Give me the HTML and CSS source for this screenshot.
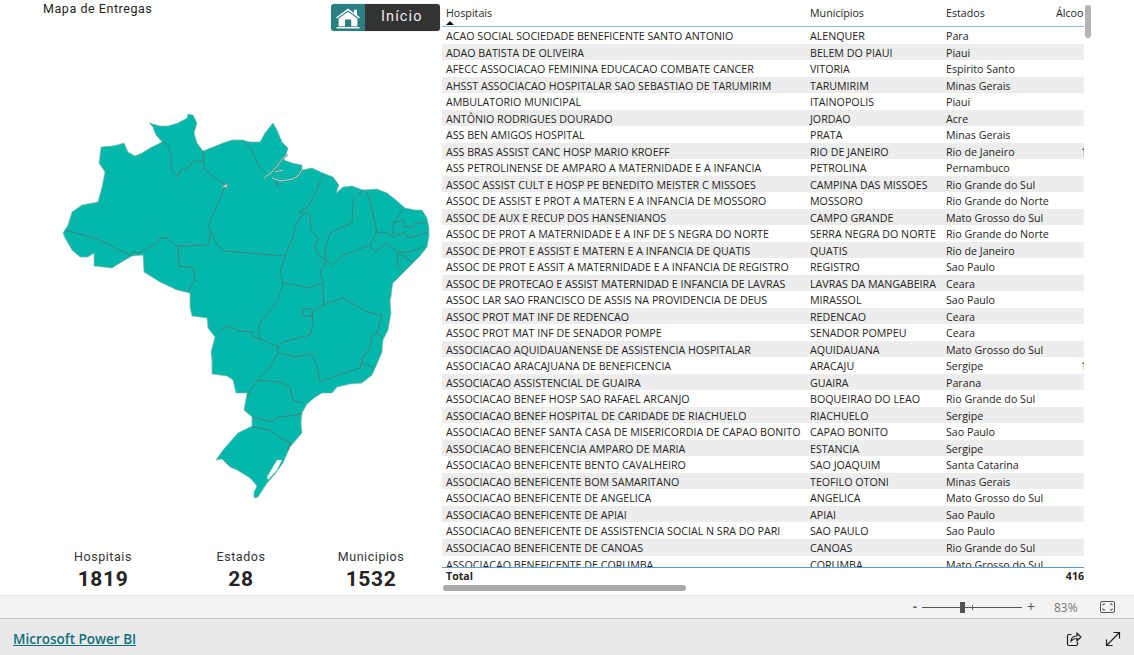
FILE: index.html
```html
<!DOCTYPE html>
<html lang="pt">
<head>
<meta charset="utf-8">
<title>Mapa de Entregas</title>
<link rel="stylesheet" href="styles.css">
</head>
<body>
<div class="app">
  <main class="report">
    <section class="left">
      <header class="left-head">
        <h1 class="title">Mapa de Entregas</h1>
        <a class="home-btn" href="#">
          <span class="home-icon">
            <svg width="26" height="22" viewBox="0 0 26 22"><path class="home-white" d="M1 10.5 13 1.500l6 4.400V2.800h3v5.300l3 2.400-.7 1.100L13 3.400 1.700 11.600z"/><path class="home-white" d="M3.600 11.600 13 4.800l9.400 6.800v7.600h-6.200v-6.600H10v6.600H3.600z"/><rect class="home-white" x="1.500" y="20" width="23" height="1.400"/></svg>
          </span>
          <span class="home-label">Início</span>
        </a>
      </header>
      <svg class="map" width="442" height="405" viewBox="0 100 442 405">
        <path class="land" d="M101 147 112 146 117 145 124 143 128 152 135 156 142 153 150 148 162 142 156 135 154 130 153 127 149 123 160 126 168 126 178 123 187 118 188 114 193 115 197 123 194 133 197 143 203 151 213 147 223 143 232 140 242 140 250 142 260 142 265 133 273 123 277 130 282 142 288 148 286 155 284 160 292 163 302 165 302 170 312 168 323 173 333 177 339 185 336 193 343 187 352 186 363 190 377 189 387 193 396 200 405 208 415 210 422 210 427 218 429 228 429 236 427 247 420 256 413 263 403 273 393 283 392 288 391 297 390 300 391 313 388 330 383 340 382 352 377 364 372 375 362 383 350 384 337 387 332 393 322 393 314 398 307 404 302 413 301 423 302 433 290 447 283 463 275 474 267 483 258 497 254 498 254 492 257 486 250 478 237 470 230 467 222 459 216 460 223 450 230 442 238 433 252 426 252 417 244 410 247 393 236 393 233 380 227 376 212 374 212 360 211 352 215 337 208 328 207 318 192 316 190 307 190 293 177 290 160 282 144 272 143 255 132 256 120 263 112 268 94 266 94 253 88 257 80 257 72 250 65 238 63 233 68 225 72 212 82 205 98 202 102 187 105 172 99 163 100 156z"/>
        <path class="lake" d="M277 460 282 460 277 470 268 480 267 477z"/>
        <path class="blob" d="M222 187 226 184 228 185 226 188z"/>
        <path class="delta-edge" d="M264 178 272 172 278 165 284 157 288 155M272 178 280 181 293 179 298 176 302 170M275 172 283 170M276 181 278 186"/>
        <path class="delta" d="M264 178 272 172 278 165 284 157 288 155M272 178 280 181 293 179 298 176 302 170M275 172 283 170"/>
        <path class="border" d="M65 230 97 239 131 256 133 252 140 253 148 248 157 243 160 238 167 238 176 246 208 245 211 232 208 226 225 187"/>
        <path class="border" d="M178 246 179 266 193 268 195 280 188 292"/>
        <path class="border" d="M162 142 168 145 171 157 171 169 178 177 181 169 187 170 193 161 203 161"/>
        <path class="border" d="M203 151 204 168 213 177 225 184"/>
        <path class="border" d="M211 232 217 245 223 251 285 256 293 237 295 227 303 213 299 212 308 207 317 190 323 174"/>
        <path class="border" d="M242 140 252 150 258 165 265 173"/>
        <path class="border" d="M303 213 310 213 311 230 318 238 315 247 320 257 326 260 333 265 343 255 357 250 370 245 375 252 387 243 398 252 413 263"/>
        <path class="border" d="M285 256 280 273 283 283 295 285 308 288 323 283 320 273 326 260"/>
        <path class="border" d="M323 283 324 307"/>
        <path class="border" d="M283 283 278 300 272 308 260 323 258 333 262 340 278 347 283 342 298 338 310 335 313 323 312 313 323 305 337 300 343 298 350 302 367 312 382 315 377 333 383 337"/>
        <path class="border" d="M303 309H312V316H303z"/>
        <path class="border" d="M217 332 229 326 240 331 253 332 252 336 262 340"/>
        <path class="border" d="M278 347 278 353 270 367 258 380 250 390 248 397"/>
        <path class="border" d="M258 380 280 382 290 387 293 400 303 403"/>
        <path class="border" d="M278 353 295 357 312 354 318 370 320 382 338 375 360 368 363 357 370 348 372 335 377 333"/>
        <path class="border" d="M362 363 372 367"/>
        <path class="border" d="M326 260 325 250 330 233 343 227 352 223 353 200 363 190"/>
        <path class="border" d="M367 192 372 210 377 232 370 245"/>
        <path class="border" d="M375 232 387 233 393 237 405 232 407 238 427 233"/>
        <path class="border" d="M393 237 393 223 403 209"/>
        <path class="border" d="M393 223 403 220 405 227 413 227 415 223 427 223"/>
        <path class="border" d="M398 252 410 252 425 246"/>
        <path class="border" d="M398 253 397 265 403 272"/>
        <path class="border" d="M252 417 273 422 277 417 298 415 302 413"/>
        <path class="border" d="M252 427 270 430 280 438 290 442 288 450"/>
      </svg>
      <div class="cards">
        <div class="card"><div class="card-label">Hospitais</div><div class="card-value">1819</div></div>
        <div class="card"><div class="card-label">Estados</div><div class="card-value">28</div></div>
        <div class="card"><div class="card-label">Municipios</div><div class="card-value">1532</div></div>
      </div>
    </section>
    <section class="grid-wrap">
      <div class="row head"><span class="sorted">Hospitais</span><span>Municípios</span><span>Estados</span><span>Álcool</span></div>
      <div class="rows">
        <div class="row"><span>ACAO SOCIAL SOCIEDADE BENEFICENTE SANTO ANTONIO</span><span>ALENQUER</span><span>Para</span><span></span></div>
        <div class="row"><span>ADAO BATISTA DE OLIVEIRA</span><span>BELEM DO PIAUI</span><span>Piaui</span><span></span></div>
        <div class="row"><span>AFECC ASSOCIACAO FEMININA EDUCACAO COMBATE CANCER</span><span>VITORIA</span><span>Espirito Santo</span><span></span></div>
        <div class="row"><span>AHSST ASSOCIACAO HOSPITALAR SAO SEBASTIAO DE TARUMIRIM</span><span>TARUMIRIM</span><span>Minas Gerais</span><span></span></div>
        <div class="row"><span>AMBULATORIO MUNICIPAL</span><span>ITAINOPOLIS</span><span>Piaui</span><span></span></div>
        <div class="row"><span>ANTÔNIO RODRIGUES DOURADO</span><span>JORDAO</span><span>Acre</span><span></span></div>
        <div class="row"><span>ASS BEN AMIGOS HOSPITAL</span><span>PRATA</span><span>Minas Gerais</span><span></span></div>
        <div class="row"><span>ASS BRAS ASSIST CANC HOSP MARIO KROEFF</span><span>RIO DE JANEIRO</span><span>Rio de Janeiro</span><span class="num">1</span></div>
        <div class="row"><span>ASS PETROLINENSE DE AMPARO A MATERNIDADE E A INFANCIA</span><span>PETROLINA</span><span>Pernambuco</span><span></span></div>
        <div class="row"><span>ASSOC ASSIST CULT E HOSP PE BENEDITO MEISTER C MISSOES</span><span>CAMPINA DAS MISSOES</span><span>Rio Grande do Sul</span><span></span></div>
        <div class="row"><span>ASSOC DE ASSIST E PROT A MATERN E A INFANCIA DE MOSSORO</span><span>MOSSORO</span><span>Rio Grande do Norte</span><span></span></div>
        <div class="row"><span>ASSOC DE AUX E RECUP DOS HANSENIANOS</span><span>CAMPO GRANDE</span><span>Mato Grosso do Sul</span><span></span></div>
        <div class="row"><span>ASSOC DE PROT A MATERNIDADE E A INF DE S NEGRA DO NORTE</span><span>SERRA NEGRA DO NORTE</span><span>Rio Grande do Norte</span><span></span></div>
        <div class="row"><span>ASSOC DE PROT E ASSIST E MATERN E A INFANCIA DE QUATIS</span><span>QUATIS</span><span>Rio de Janeiro</span><span></span></div>
        <div class="row"><span>ASSOC DE PROT E ASSIT A MATERNIDADE E A INFANCIA DE REGISTRO</span><span>REGISTRO</span><span>Sao Paulo</span><span></span></div>
        <div class="row"><span>ASSOC DE PROTECAO E ASSIST MATERNIDAD E INFANCIA DE LAVRAS</span><span>LAVRAS DA MANGABEIRA</span><span>Ceara</span><span></span></div>
        <div class="row"><span>ASSOC LAR SAO FRANCISCO DE ASSIS NA PROVIDENCIA DE DEUS</span><span>MIRASSOL</span><span>Sao Paulo</span><span></span></div>
        <div class="row"><span>ASSOC PROT MAT INF DE REDENCAO</span><span>REDENCAO</span><span>Ceara</span><span></span></div>
        <div class="row"><span>ASSOC PROT MAT INF DE SENADOR POMPE</span><span>SENADOR POMPEU</span><span>Ceara</span><span></span></div>
        <div class="row"><span>ASSOCIACAO AQUIDAUANENSE DE ASSISTENCIA HOSPITALAR</span><span>AQUIDAUANA</span><span>Mato Grosso do Sul</span><span></span></div>
        <div class="row"><span>ASSOCIACAO ARACAJUANA DE BENEFICENCIA</span><span>ARACAJU</span><span>Sergipe</span><span class="num">1</span></div>
        <div class="row"><span>ASSOCIACAO ASSISTENCIAL DE GUAIRA</span><span>GUAIRA</span><span>Parana</span><span></span></div>
        <div class="row"><span>ASSOCIACAO BENEF HOSP SAO RAFAEL ARCANJO</span><span>BOQUEIRAO DO LEAO</span><span>Rio Grande do Sul</span><span></span></div>
        <div class="row"><span>ASSOCIACAO BENEF HOSPITAL DE CARIDADE DE RIACHUELO</span><span>RIACHUELO</span><span>Sergipe</span><span></span></div>
        <div class="row"><span>ASSOCIACAO BENEF SANTA CASA DE MISERICORDIA DE CAPAO BONITO</span><span>CAPAO BONITO</span><span>Sao Paulo</span><span></span></div>
        <div class="row"><span>ASSOCIACAO BENEFICENCIA AMPARO DE MARIA</span><span>ESTANCIA</span><span>Sergipe</span><span></span></div>
        <div class="row"><span>ASSOCIACAO BENEFICENTE BENTO CAVALHEIRO</span><span>SAO JOAQUIM</span><span>Santa Catarina</span><span></span></div>
        <div class="row"><span>ASSOCIACAO BENEFICENTE BOM SAMARITANO</span><span>TEOFILO OTONI</span><span>Minas Gerais</span><span></span></div>
        <div class="row"><span>ASSOCIACAO BENEFICENTE DE ANGELICA</span><span>ANGELICA</span><span>Mato Grosso do Sul</span><span></span></div>
        <div class="row"><span>ASSOCIACAO BENEFICENTE DE APIAI</span><span>APIAI</span><span>Sao Paulo</span><span></span></div>
        <div class="row"><span>ASSOCIACAO BENEFICENTE DE ASSISTENCIA SOCIAL N SRA DO PARI</span><span>SAO PAULO</span><span>Sao Paulo</span><span></span></div>
        <div class="row"><span>ASSOCIACAO BENEFICENTE DE CANOAS</span><span>CANOAS</span><span>Rio Grande do Sul</span><span></span></div>
        <div class="row"><span>ASSOCIACAO BENEFICENTE DE CORUMBA</span><span>CORUMBA</span><span>Mato Grosso do Sul</span><span></span></div>
      </div>
      <div class="total"><span>Total</span><span>416</span></div>
      <div class="hbar"><div class="hthumb"></div></div>
      <div class="vthumb"></div>
    </section>
  </main>
  <div class="zoombar">
    <span class="zoom-sign">-</span>
    <div class="slider"><span class="tick"></span><span class="thumb"></span></div>
    <span class="zoom-sign plus">+</span>
    <span class="zoom-pct">83%</span>
    <svg class="fit" width="15" height="12" viewBox="0 0 15 12"><rect class="ico-thin" x=".5" y=".5" width="14" height="11" rx="1.500"/><path class="ico-thin" d="M3 4.500V3h2M10 3h2v1.500M12 7.500V9h-2M5 9H3V7.500"/></svg>
  </div>
  <footer class="footer">
    <a class="pbi" href="#">Microsoft Power BI</a>
    <div class="foot-icons">
      <svg width="16" height="16" viewBox="0 0 16 16"><path class="ico-dark" d="M5.500 3.500H3A1.500 1.500 0 0 0 1.500 5v8A1.500 1.500 0 0 0 3 14.500h7a1.500 1.500 0 0 0 1.500-1.500v-2"/><path class="ico-dark" d="M5 10c.3-3 2.500-5 6-5V2.200L15 6l-4 3.800V7.500C8.500 7.500 6.500 8.300 5 10z"/></svg>
      <svg width="16" height="16" viewBox="0 0 16 16"><path class="ico-dark" d="M1.500 14.500 14.500 1.500M8.500 1.500h6v6M1.500 8.500v6h6"/></svg>
    </div>
  </footer>
</div>
</body>
</html>
```

FILE: styles.css
```css
* { box-sizing: border-box; }
html, body { margin: 0; padding: 0; height: 100%; background: #fff; }
body { overflow: hidden; font-family: "Open Sans", "Noto Sans", sans-serif; color: #252423; }
.app { display: flex; flex-direction: column; width: 1134px; height: 655px; }
.report { display: flex; height: 595px; background: #fff; flex: none; }

.left { width: 442px; flex: none; display: flex; flex-direction: column; }
.left-head { display: flex; justify-content: space-between; align-items: flex-start; height: 100px; padding: 0 2px 0 43px; }
.title { margin: 2px 0 0; font: 400 12.5px/14px Roboto, sans-serif; letter-spacing: .55px; color: #252423; }
.home-btn { display: flex; width: 109px; height: 27px; margin-top: 4px; border-radius: 3px; overflow: hidden; text-decoration: none; box-shadow: 0 0 1px #999; }
.home-icon { width: 34px; background: #2a7f82; display: flex; align-items: center; justify-content: center; }
.home-white { fill: #fff; }
.home-label { flex: 1; background: #333; color: #eee; font: 400 14.5px/26px Roboto, sans-serif; letter-spacing: 1.1px; padding-left: 16px; }

.map { display: block; flex: none; }
.land { fill: #03b8aa; stroke: #8fb5b1; stroke-width: .7; stroke-linejoin: round; }
.lake { fill: #fff; }
.blob { fill: #ccc; stroke: #777; stroke-width: .5; }
.delta-edge { fill: none; stroke: #4b7c78; stroke-width: 1.5; }
.delta { fill: none; stroke: #e8efee; stroke-width: .8; }
.border { fill: none; stroke: #4b7c78; stroke-width: .9; stroke-linejoin: round; }

.cards { display: grid; grid-template-columns: 138px 138px 122px; padding: 44px 0 0 34px; }
.card { text-align: center; }
.card-label { font: 400 12.5px/16px Roboto, sans-serif; letter-spacing: .55px; color: #333; }
.card-value { font: 700 21px/28px Roboto, sans-serif; letter-spacing: .6px; color: #252423; }

.grid-wrap { position: relative; width: 642px; flex: none; display: flex; flex-direction: column; }
.row { display: grid; grid-template-columns: 364px 136px 110px 32px; height: 16.53px; font-size: 10.68px; line-height: 18.5px; overflow: hidden; white-space: nowrap; }
.row > span { padding-left: 4px; overflow: hidden; }
.row > .num { padding-left: 29px; }
.head { height: 27px; line-height: 26px; border-bottom: 1px solid #7fbdf0; }
.sorted { position: relative; }
.sorted::after { content: ""; position: absolute; left: 4px; top: 21px; border: 4px solid transparent; border-top: 0; border-bottom: 4px solid #111; }
.rows { height: 540px; overflow: hidden; }
.rows .row:nth-child(even) { background: #ededed; }
.total { display: flex; justify-content: space-between; height: 18px; border-top: 1px solid #5b9bd5; padding: 0 0 0 4px; font-size: 10.6px; font-weight: 700; line-height: 16px; }
.hbar { height: 6px; }
.hthumb { width: 243px; height: 6px; margin-left: 1px; background: #aaa; border-radius: 3px; }
.vthumb { position: absolute; left: 643px; top: 5px; width: 6px; height: 33px; background: #b3b3b3; border-radius: 3px; }

.zoombar { display: flex; align-items: center; justify-content: flex-end; height: 24px; flex: none; background: #f3f3f3; border-top: 1px solid #e4e4e4; border-bottom: 1px solid #c8c8c8; padding-right: 19px; font-size: 12px; color: #666; }
.zoom-sign { width: 8px; text-align: center; font-weight: 700; font-size: 12px; line-height: 20px; color: #555; }
.zoom-sign.plus { font-weight: 400; font-size: 14px; margin-left: 5px; }
.slider { position: relative; width: 100px; height: 1px; margin-left: 3px; background: #555; }
.tick { position: absolute; left: 50px; top: -2px; width: 1px; height: 5px; background: #666; }
.thumb { position: absolute; left: 38px; top: -5px; width: 5px; height: 11px; background: #555; }
.zoom-pct { margin-left: 19px; width: 26px; color: #777; }
.fit { margin-left: 20px; }
.ico-thin { fill: none; stroke: #555; stroke-width: 1; }

.footer { flex: 1; display: flex; align-items: center; justify-content: space-between; background: #e9e9e9; padding: 3px 13px 0; }
.pbi { font-size: 13.5px; font-weight: 600; color: #10707a; text-decoration: underline; }
.foot-icons { display: flex; gap: 23px; align-items: center; }
.ico-dark { fill: none; stroke: #1f1f1f; stroke-width: 1.2; }
```
